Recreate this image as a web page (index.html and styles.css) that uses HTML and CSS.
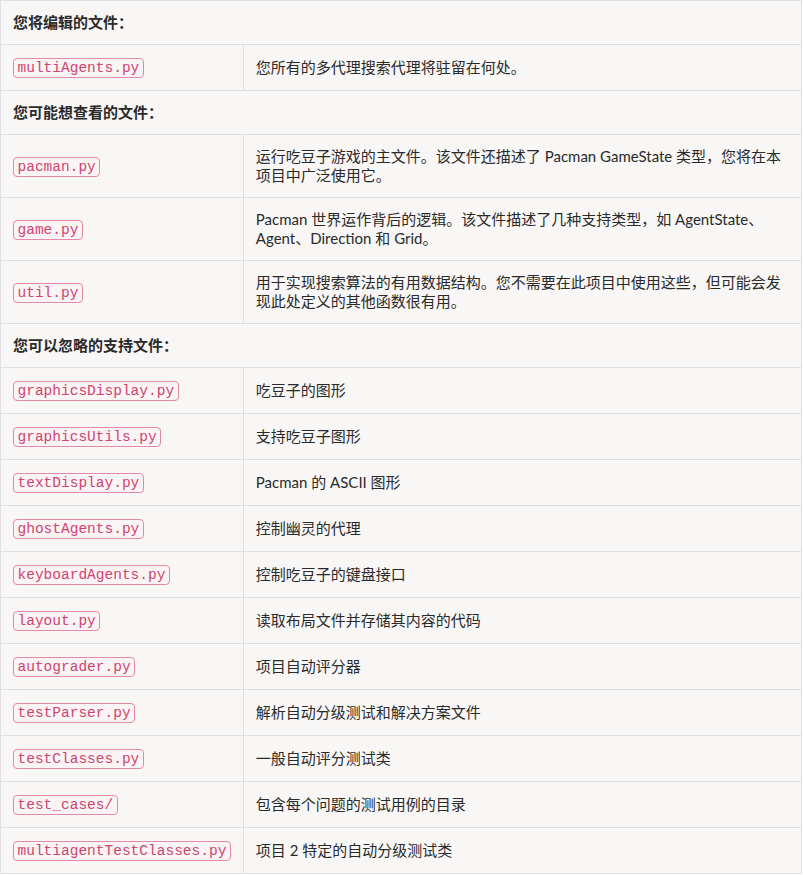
FILE: index.html
```html
<!DOCTYPE html>
<html lang="zh">
<head>
<meta charset="utf-8">
<link rel="stylesheet" href="styles.css">
</head>
<body>
<table class="files">
<tbody>
<tr class="head"><td colspan="2">您将编辑的文件：</td></tr>
<tr><td class="name"><code>multiAgents.py</code></td><td class="desc">您所有的多代理搜索代理将驻留在何处。</td></tr>
<tr class="head"><td colspan="2">您可能想查看的文件：</td></tr>
<tr><td class="name"><code>pacman.py</code></td><td class="desc">运行吃豆子游戏的主文件。该文件还描述了 Pacman GameState 类型，您将在本项目中广泛使用它。</td></tr>
<tr><td class="name"><code>game.py</code></td><td class="desc">Pacman 世界运作背后的逻辑。该文件描述了几种支持类型，如 AgentState、Agent、Direction 和 Grid。</td></tr>
<tr><td class="name"><code>util.py</code></td><td class="desc">用于实现搜索算法的有用数据结构。您不需要在此项目中使用这些，但可能会发现此处定义的其他函数很有用。</td></tr>
<tr class="head"><td colspan="2">您可以忽略的支持文件：</td></tr>
<tr><td class="name"><code>graphicsDisplay.py</code></td><td class="desc">吃豆子的图形</td></tr>
<tr><td class="name"><code>graphicsUtils.py</code></td><td class="desc">支持吃豆子图形</td></tr>
<tr><td class="name"><code>textDisplay.py</code></td><td class="desc">Pacman 的 ASCII 图形</td></tr>
<tr><td class="name"><code>ghostAgents.py</code></td><td class="desc">控制幽灵的代理</td></tr>
<tr><td class="name"><code>keyboardAgents.py</code></td><td class="desc">控制吃豆子的键盘接口</td></tr>
<tr><td class="name"><code>layout.py</code></td><td class="desc">读取布局文件并存储其内容的代码</td></tr>
<tr><td class="name"><code>autograder.py</code></td><td class="desc">项目自动评分器</td></tr>
<tr><td class="name"><code>testParser.py</code></td><td class="desc">解析自动分级测试和解决方案文件</td></tr>
<tr><td class="name"><code>testClasses.py</code></td><td class="desc">一般自动评分测试类</td></tr>
<tr><td class="name"><code>test_cases/</code></td><td class="desc">包含每个问题的测试用例的目录</td></tr>
<tr><td class="name"><code>multiagentTestClasses.py</code></td><td class="desc">项目 2 特定的自动分级测试类</td></tr>
</tbody>
</table>
</body>
</html>
```

FILE: styles.css
```css
html, body {
  margin: 0;
  padding: 0;
  background: #ffffff;
}

body {
  font-family: Lato, "Noto Sans CJK SC", sans-serif;
  font-size: 15px;
  line-height: 19px;
  color: #2a2a2a;
}

.files {
  width: 802px;
  border-collapse: collapse;
  background: #f8f7f6;
}

.files td {
  border: 1px solid #dfdee5;
  padding: 12px 12px;
  vertical-align: middle;
  text-align: left;
}

.files .head td {
  font-weight: 700;
}

.files .name {
  width: 217px;
}

code {
  font-family: "Liberation Mono", "Courier New", monospace;
  font-size: 14.5px;
  color: #cf4470;
  background: #faf4f5;
  border: 1px solid #e58aa6;
  border-radius: 4px;
  padding: 1px 3.5px;
}
```
